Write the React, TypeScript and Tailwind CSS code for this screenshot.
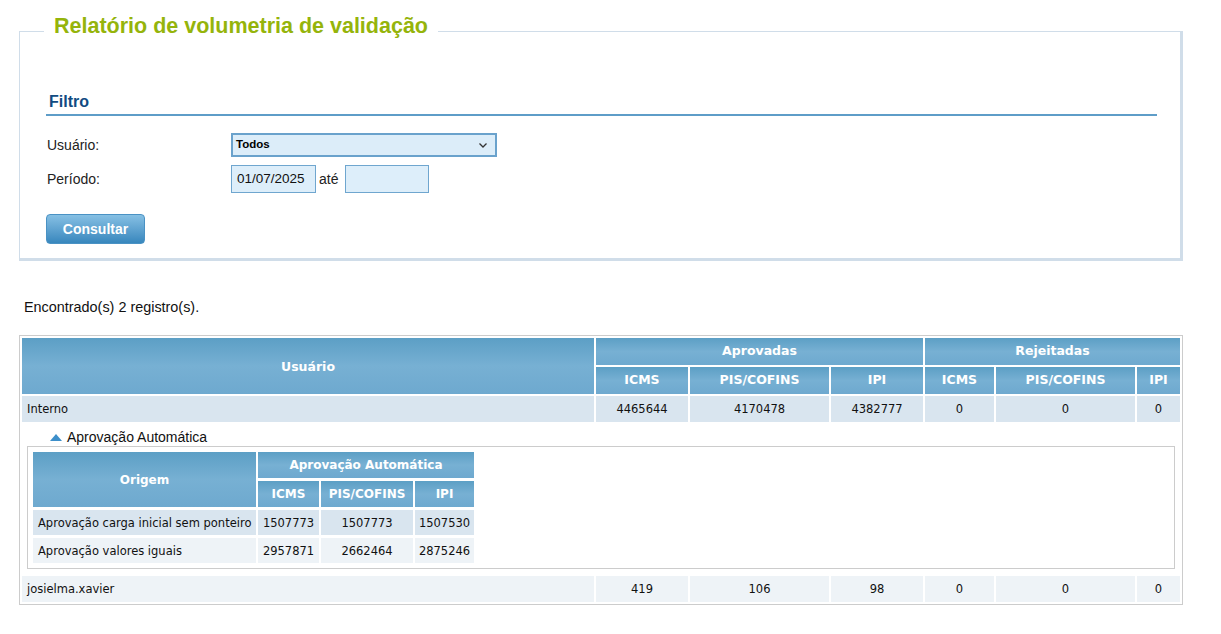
import React from 'react';

type CellProps = { children?: React.ReactNode; className?: string };

const Th: React.FC<CellProps> = ({ children, className = '' }) => (
  <div
    className={`flex items-center justify-center bg-linear-to-b from-[#5c9fc5] via-[#77b0d3] to-[#6ea9cf] font-bold text-white ${className}`}
  >
    {children}
  </div>
);

const Td: React.FC<CellProps> = ({ children, className = '' }) => (
  <div className={`flex items-center pt-[2px] ${className}`}>{children}</div>
);

const outerRows = [
  { user: 'Interno', values: ['4465644', '4170478', '4382777', '0', '0', '0'], bg: 'bg-[#d9e5ef]' },
  { user: 'josielma.xavier', values: ['419', '106', '98', '0', '0', '0'], bg: 'bg-[#eef3f7]' },
];

const innerRows = [
  { origem: 'Aprovação carga inicial sem ponteiro', values: ['1507773', '1507773', '1507530'], bg: 'bg-[#d9e5ef]' },
  { origem: 'Aprovação valores iguais', values: ['2957871', '2662464', '2875246'], bg: 'bg-[#eef3f7]' },
];

const OuterRow: React.FC<{ row: (typeof outerRows)[number] }> = ({ row }) => (
  <>
    <Td className={`h-[26px] pl-[5px] ${row.bg}`}>{row.user}</Td>
    {row.values.map((v, i) => (
      <Td key={i} className={`h-[26px] justify-center ${row.bg}`}>
        {v}
      </Td>
    ))}
  </>
);

const AutoApproval: React.FC = () => (
  <div className="col-span-7 px-[5px] pt-[4px] pb-[5px]">
    <div className="flex h-[18px] items-center pl-[23px] font-['Liberation_Sans',Arial,sans-serif] text-[14px] text-[#111]">
      <svg width="12" height="7" viewBox="0 0 12 7" className="mr-[5px]">
        <polygon points="6,0 12,7 0,7" fill="#3d8fca" />
      </svg>
      Aprovação Automática
    </div>
    <div className="border border-[#cccccc] p-[5px]">
      <div className="grid grid-cols-[223px_61px_92px_59px] gap-x-[2px] gap-y-[3px]">
        <Th className="row-span-2 text-[12px]">Origem</Th>
        <Th className="col-span-3 h-[26px] text-[12px]">Aprovação Automática</Th>
        <Th className="h-[26px] text-[12px]">ICMS</Th>
        <Th className="h-[26px] text-[12px]">PIS/COFINS</Th>
        <Th className="h-[26px] text-[12px]">IPI</Th>
        {innerRows.map((r) => (
          <React.Fragment key={r.origem}>
            <Td className={`h-[25px] pl-[5px] ${r.bg}`}>{r.origem}</Td>
            {r.values.map((v, i) => (
              <Td key={i} className={`h-[25px] justify-center ${r.bg}`}>
                {v}
              </Td>
            ))}
          </React.Fragment>
        ))}
      </div>
    </div>
  </div>
);

const App: React.FC = () => {
  return (
    <div className="min-h-screen bg-white">
      <div className="ml-[19px] w-[1164px] pt-[31px] font-['Liberation_Sans',Arial,sans-serif] text-[#222]">
        {/* Filtro */}
        <div className="border-t border-l border-r-[3px] border-b-[3px] border-[#d0dde9] pb-[14px]">
          <div className="-mt-[18px] ml-[24px] w-fit bg-white px-[10px] text-[21.5px] leading-[24px] font-bold text-[#95b40b]">
            Relatório de volumetria de validação
          </div>

          <div className="mt-[54px] ml-[26px] mr-[23px] border-b-2 border-[#5e9dc8] pb-[2px] pl-[3px] text-[16px] leading-[20px] font-bold text-[#114b82]">
            Filtro
          </div>

          <div className="mt-[17px] ml-[27px] flex h-[24px] items-center text-[14px]">
            <span className="w-[184px]">Usuário:</span>
            <div className="flex h-[24px] w-[266px] items-center justify-between border-2 border-[#6aa2cc] bg-[#dcedf9] pl-[3px] pr-[8px] text-[11.5px] font-bold text-black">
              <span>Todos</span>
              <svg width="8" height="5" viewBox="0 0 8 5">
                <polyline points="0.5,0.5 4,4 7.5,0.5" fill="none" stroke="#333" strokeWidth="1.3" />
              </svg>
            </div>
          </div>

          <div className="mt-[8px] ml-[27px] flex h-[28px] items-center text-[14px]">
            <span className="w-[184px]">Período:</span>
            <div className="flex h-[28px] w-[85px] items-center border border-[#6fa6cf] bg-[#ddeefa] pl-[5px] text-[13.5px] text-[#111]">
              01/07/2025
            </div>
            <span className="ml-[3px] mr-[7px]">até</span>
            <div className="h-[28px] w-[84px] border border-[#6fa6cf] bg-[#ddeefa]" />
          </div>

          <button className="mt-[21px] ml-[26px] flex h-[30px] w-[99px] items-center justify-center rounded-[4px] border border-[#4a92c4] bg-linear-to-b from-[#86c0e4] to-[#3787bd] text-[14px] font-bold text-white">
            Consultar
          </button>
        </div>

        <div className="mt-[36px] pl-[5px] text-[14.4px] leading-[20px] text-[#111]">
          Encontrado(s) 2 registro(s).
        </div>

        {/* Resultado */}
        <div className="mt-[18px] border border-[#cccccc] p-[2px]">
          <div className="grid grid-cols-[572px_92px_139px_92px_69px_139px_43px] gap-[2px] font-['DejaVu_Sans',Verdana,sans-serif] text-[11.5px] text-[#111]">
            <Th className="row-span-2 pt-[2px] text-[12.5px]">Usuário</Th>
            <Th className="col-span-3 h-[27px] text-[12.5px]">Aprovadas</Th>
            <Th className="col-span-3 h-[27px] text-[12.5px]">Rejeitadas</Th>
            <Th className="h-[27px] text-[12.5px]">ICMS</Th>
            <Th className="h-[27px] text-[12.5px]">PIS/COFINS</Th>
            <Th className="h-[27px] text-[12.5px]">IPI</Th>
            <Th className="h-[27px] text-[12.5px]">ICMS</Th>
            <Th className="h-[27px] text-[12.5px]">PIS/COFINS</Th>
            <Th className="h-[27px] text-[12.5px]">IPI</Th>

            <OuterRow row={outerRows[0]} />
            <AutoApproval />
            <OuterRow row={outerRows[1]} />
          </div>
        </div>
      </div>
    </div>
  );
};

export default App;
